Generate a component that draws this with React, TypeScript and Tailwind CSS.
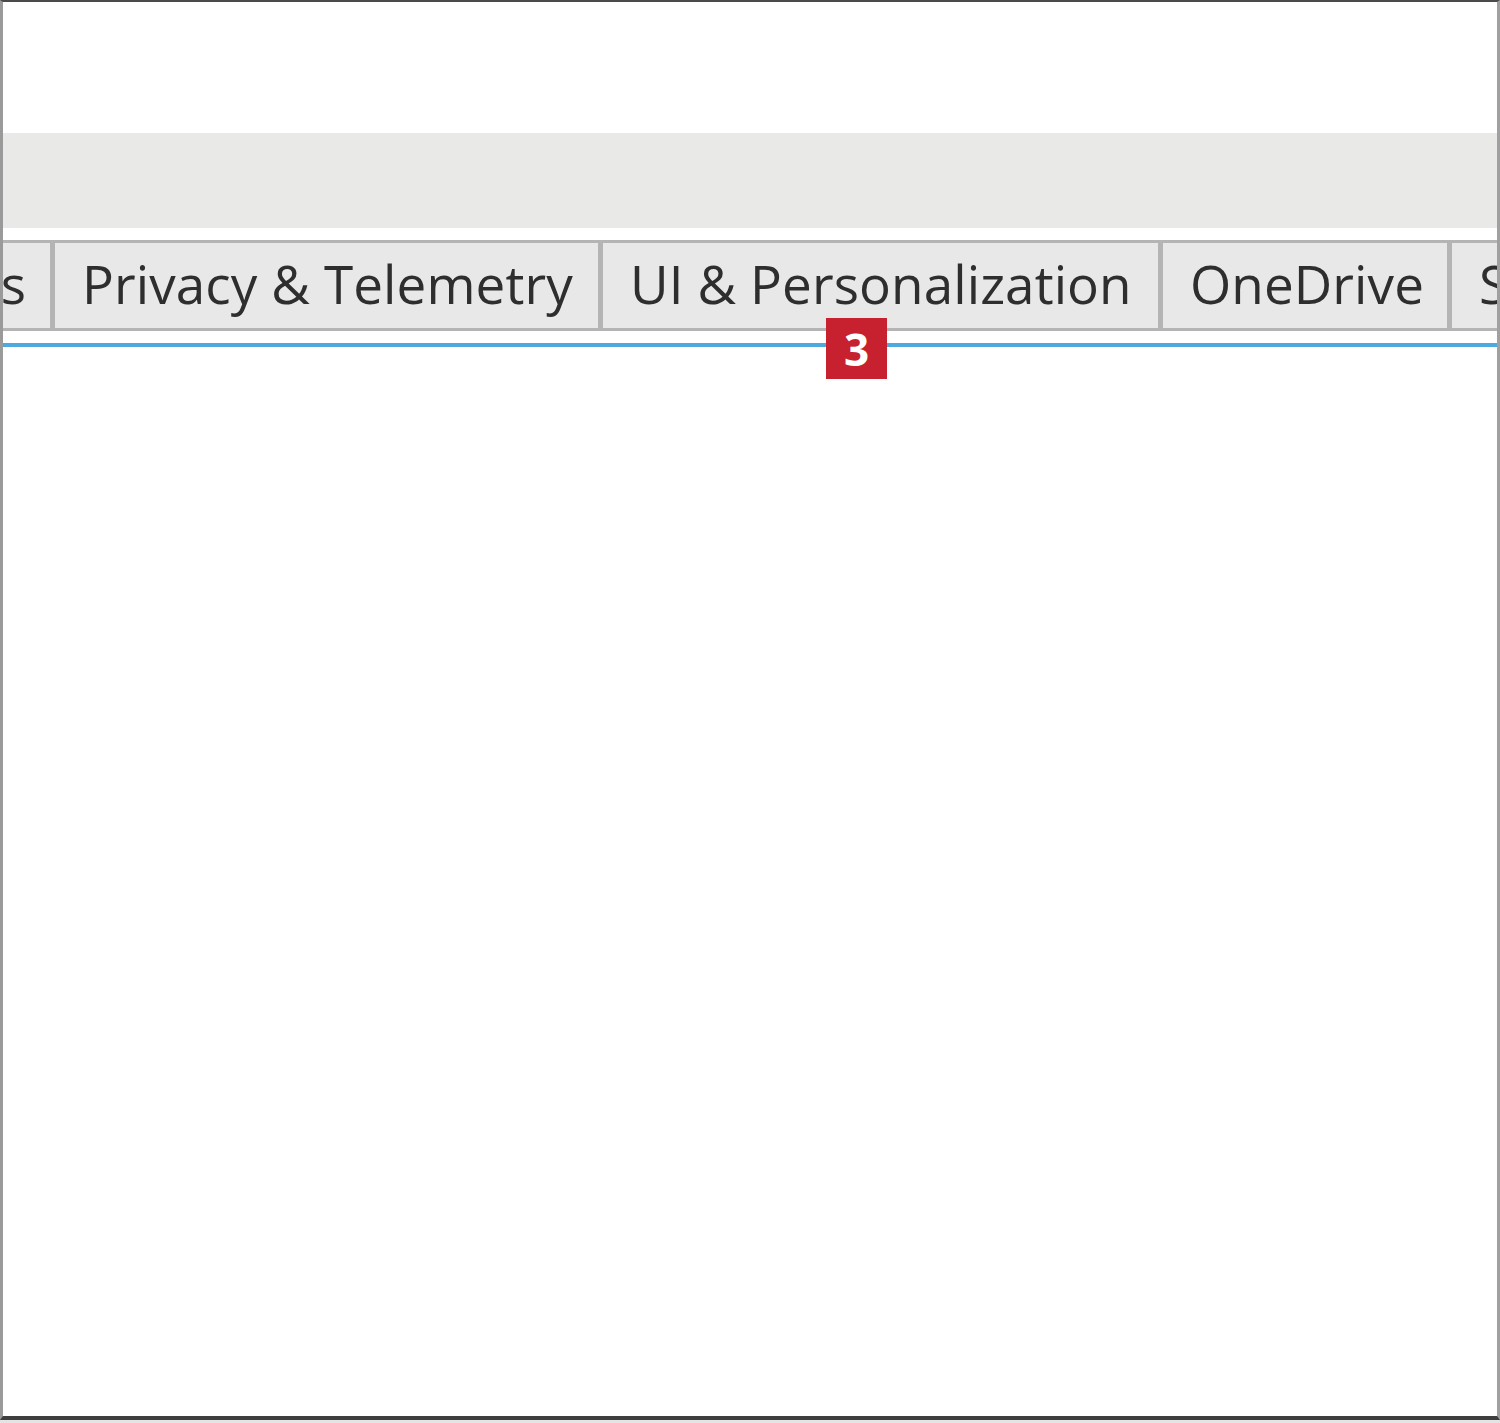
import React from "react";

const tabs = [
  { label: "Services", width: "w-[260px]" },
  { label: "Privacy & Telemetry", width: "w-[549px]" },
  { label: "UI & Personalization", width: "w-[561px]" },
  { label: "OneDrive", width: "w-[290px]" },
  { label: "System", width: "w-[260px]" },
];

const App = () => {
  return (
    <div className="w-[1500px] h-[1423px] bg-[#e4e4e4] overflow-hidden">
      <div className="h-[1420px] bg-white border-t-2 border-l-[3px] border-r-[3px] border-b-[4px] border-t-[#4a4a4a] border-l-[#9a9a9a] border-r-[#a0a0a0] border-b-[#3e3e3e] flex flex-col overflow-hidden">
        <div className="h-[131px] bg-white shrink-0" />
        <div className="h-[95px] bg-[#e9eae8] shrink-0" />
        <div className="h-[12px] bg-white shrink-0" />

        <div className="relative shrink-0">
          <div className="flex h-[91px] ml-[-210px]">
            {tabs.map((tab, i) => (
              <div
                key={i}
                className={`${tab.width} shrink-0 h-full bg-[#e7e8e7] border-[3px] border-[#b4b4b4] ${
                  i > 0 ? "-ml-[1px] pl-[27px]" : "justify-end pr-[24px]"
                } flex items-center overflow-hidden`}
              >
                <span
                  className="whitespace-nowrap text-[#2e2e2e] text-[53px] leading-none pb-[4px] tracking-[0.1px]"
                  style={{ fontFamily: '"Open Sans", "Noto Sans", sans-serif' }}
                >
                  {tab.label}
                </span>
              </div>
            ))}
          </div>

          <div className="h-[12px] bg-white" />
          <div className="h-[4px] bg-[#4eaade]" />

          {/* annotation badge */}
          <div
            className="absolute left-[823px] top-[78px] w-[61px] h-[61px] bg-[#c7202e] flex items-center justify-center text-white text-[44px] font-bold leading-none"
            style={{ fontFamily: '"Open Sans", "Liberation Sans", sans-serif' }}
          >
            3
          </div>
        </div>

        <div className="flex-1 bg-white" />
      </div>
    </div>
  );
};

export default App;
